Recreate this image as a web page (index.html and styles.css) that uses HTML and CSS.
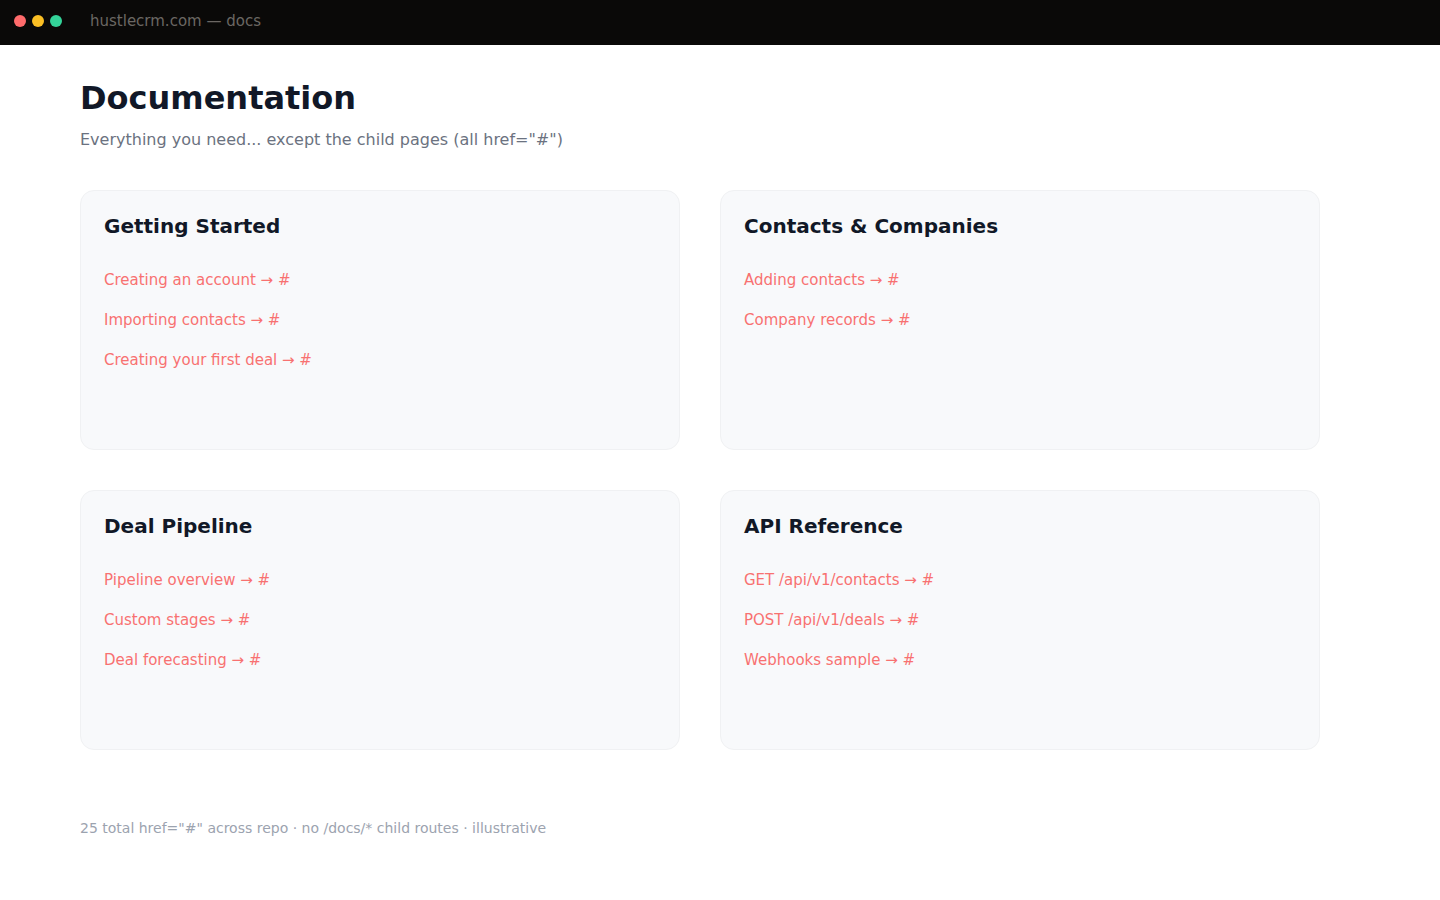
FILE: index.html
```html
<!DOCTYPE html>
<html lang="en">
<head>
<meta charset="utf-8">
<title>hustlecrm.com — docs</title>
<link rel="stylesheet" href="styles.css">
</head>
<body>
<header class="topbar">
  <div class="dots">
    <span class="dot dot-red"></span>
    <span class="dot dot-yellow"></span>
    <span class="dot dot-green"></span>
  </div>
  <span class="site">hustlecrm.com — docs</span>
</header>
<main class="page">
  <h1 class="title">Documentation</h1>
  <p class="subtitle">Everything you need... except the child pages (all href="#")</p>
  <section class="grid">
    <article class="card">
      <h2 class="card-title">Getting Started</h2>
      <nav class="links">
        <a href="#">Creating an account → #</a>
        <a href="#">Importing contacts → #</a>
        <a href="#">Creating your first deal → #</a>
      </nav>
    </article>
    <article class="card">
      <h2 class="card-title">Contacts &amp; Companies</h2>
      <nav class="links">
        <a href="#">Adding contacts → #</a>
        <a href="#">Company records → #</a>
      </nav>
    </article>
    <article class="card">
      <h2 class="card-title">Deal Pipeline</h2>
      <nav class="links">
        <a href="#">Pipeline overview → #</a>
        <a href="#">Custom stages → #</a>
        <a href="#">Deal forecasting → #</a>
      </nav>
    </article>
    <article class="card">
      <h2 class="card-title">API Reference</h2>
      <nav class="links">
        <a href="#">GET /api/v1/contacts → #</a>
        <a href="#">POST /api/v1/deals → #</a>
        <a href="#">Webhooks sample → #</a>
      </nav>
    </article>
  </section>
  <p class="footnote">25 total href="#" across repo · no /docs/* child routes · illustrative</p>
</main>
</body>
</html>
```
FILE: styles.css
```css
* { box-sizing: border-box; }

body {
  margin: 0;
  background: #ffffff;
  font-family: "DejaVu Sans", "Liberation Sans", sans-serif;
  color: #111827;
}

.topbar {
  height: 45px;
  background: #0a0908;
  display: flex;
  align-items: center;
  padding-left: 14px;
  padding-bottom: 4px;
}

.dots {
  display: flex;
  gap: 6px;
}

.dot {
  width: 12px;
  height: 12px;
  border-radius: 50%;
}

.dot-red { background: #ff6b6b; }
.dot-yellow { background: #fbbf24; }
.dot-green { background: #34d399; }

.site {
  margin-left: 28px;
  font-size: 15px;
  line-height: 18px;
  color: #6b6763;
}

.page {
  padding: 35px 80px 40px;
  width: 1320px;
}

.title {
  margin: 0;
  font-size: 32px;
  font-weight: 700;
  line-height: 37px;
  color: #111827;
}

.subtitle {
  margin: 13px 0 0;
  font-size: 16px;
  line-height: 19px;
  color: #6b7280;
}

.grid {
  margin-top: 41px;
  display: grid;
  grid-template-columns: 600px 600px;
  gap: 40px;
}

.card {
  min-height: 260px;
  background: #f8f9fb;
  border: 1px solid #f0f1f3;
  border-radius: 14px;
  padding: 23px 23px;
}

.card-title {
  margin: 0;
  font-size: 20px;
  font-weight: 700;
  line-height: 24px;
  color: #111827;
}

.links {
  margin-top: 32px;
  display: flex;
  flex-direction: column;
  align-items: flex-start;
  gap: 20px;
}

.links a {
  font-size: 15px;
  line-height: 20px;
  color: #f87171;
  text-decoration: none;
}

.footnote {
  margin: 70px 0 0;
  font-size: 14px;
  line-height: 17px;
  color: #9ca3af;
}
```
